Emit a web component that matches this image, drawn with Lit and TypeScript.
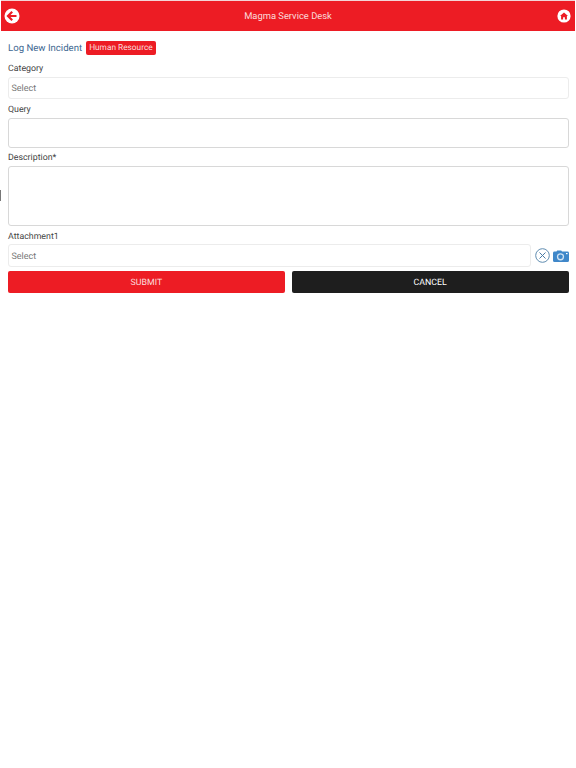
import { LitElement, html, css } from 'lit';
import { customElement } from 'lit/decorators.js';

@customElement('app-root')
export class AppRoot extends LitElement {
  static styles = css`
    :host {
      display: block;
      position: relative;
      min-height: 768px;
      background: #fff;
      font-family: Roboto, "Liberation Sans", sans-serif;
      text-rendering: geometricPrecision;
      color: #444;
    }

    .header {
      box-sizing: border-box;
      height: 31px;
      margin: 0 1px;
      border-top: 1px solid #f3d5d6;
      padding: 0 3px;
      background: #ed1c24;
      color: #fbdcdc;
      display: flex;
      align-items: center;
      justify-content: space-between;
      font-size: 9.4px;
    }
    .header svg { display: block; width: 16px; height: 16px; }

    .form { padding: 10px 7.5px 0 8px; }

    .title-row { display: flex; align-items: center; gap: 3.5px; height: 14px; }
    .title { font-size: 9.6px; color: #3d6791; }
    .badge {
      background: #ed1c24;
      color: #fbdcdc;
      font-size: 8.3px;
      line-height: 14px;
      height: 14px;
      padding: 0 3.5px;
      border-radius: 2px;
    }

    label { display: block; font-size: 8.8px; line-height: 12px; color: #444; }
    .l1 { margin-top: 8px; }
    .l2 { margin-top: 5px; }
    .l3 { margin-top: 4px; }
    .l4 { margin-top: 5px; }

    .field {
      box-sizing: border-box;
      border: 1px solid #ececec;
      border-radius: 3px;
      background: #fff;
      font-size: 9px;
      color: #777;
      padding: 2px 0 0 2.5px;
      display: flex;
      align-items: center;
    }
    .f-select { height: 22px; margin-top: 2px; }
    .f-query { height: 30px; margin-top: 2px; border-color: #d8d8d8; }
    .f-desc { height: 60px; margin-top: 2px; border-color: #d8d8d8; }

    .attach { display: flex; align-items: center; margin-top: 1px; }
    .attach .field { flex: 1; margin-top: 0; height: 23px; }
    .attach .icons { display: flex; align-items: center; gap: 3px; margin-left: 4px; }
    .attach svg { display: block; }

    .buttons { display: flex; gap: 7px; margin-top: 4px; }
    .btn {
      box-sizing: border-box;
      flex: 1;
      height: 22px;
      padding-top: 2px;
      border-radius: 2px;
      color: #fff;
      font-size: 8.8px;
      display: flex;
      align-items: center;
      justify-content: center;
    }
    .submit { background: #ed1c24; color: #fbdcdc; }
    .cancel { background: #1e1e1e; }

    .edge {
      position: absolute;
      left: 0;
      top: 190px;
      width: 1px;
      height: 11px;
      background: #777;
    }
  `;

  render() {
    return html`
      <div class="header">
        <svg viewBox="0 0 16 16">
          <circle cx="8" cy="8" r="7.500" fill="#fff" />
          <path d="M8.200 3.800 4 8l4.200 4.200M4.500 8h8" fill="none" stroke="#ed1c24" stroke-width="2.200" />
        </svg>
        <span>Magma Service Desk</span>
        <svg viewBox="0 0 16 16">
          <circle cx="8" cy="8" r="6.600" fill="#fff" />
          <path d="M8 4.400 4 8h1.100v3.400h2V9.200h1.800v2.200h2V8H12z" fill="#ed1c24" />
        </svg>
      </div>
      <div class="form">
        <div class="title-row">
          <span class="title">Log New Incident</span>
          <span class="badge">Human Resource</span>
        </div>
        <label class="l1">Category</label>
        <div class="field f-select">Select</div>
        <label class="l2">Query</label>
        <div class="field f-query"></div>
        <label class="l3">Description*</label>
        <div class="field f-desc"></div>
        <label class="l4">Attachment1</label>
        <div class="attach">
          <div class="field">Select</div>
          <div class="icons">
            <svg width="15" height="15" viewBox="0 0 15 15">
              <circle cx="7.500" cy="7.500" r="6.800" fill="none" stroke="#5f8cb0" stroke-width="1" />
              <path d="M4.500 4.500l6 6M10.500 4.500l-6 6" stroke="#4a7ba6" stroke-width="1" />
            </svg>
            <svg width="16" height="12" viewBox="0 0 16 12">
              <path d="M1.500 1.600h2L4.200.4h4L9 1.600h5.500A1.500 1.500 0 0 1 16 3v7.500a1.500 1.500 0 0 1-1.500 1.500h-13A1.500 1.500 0 0 1 0 10.500V3a1.500 1.500 0 0 1 1.500-1.400z" fill="#3f87c9" />
              <circle cx="7.500" cy="6.800" r="3.600" fill="#cfe2f3" />
              <circle cx="7.500" cy="6.800" r="2.300" fill="#3f87c9" />
              <rect x="13" y="3" width="1.600" height="1.200" fill="#fff" />
            </svg>
          </div>
        </div>
        <div class="buttons">
          <div class="btn submit">SUBMIT</div>
          <div class="btn cancel">CANCEL</div>
        </div>
      </div>
      <div class="edge"></div>
    `;
  }
}
